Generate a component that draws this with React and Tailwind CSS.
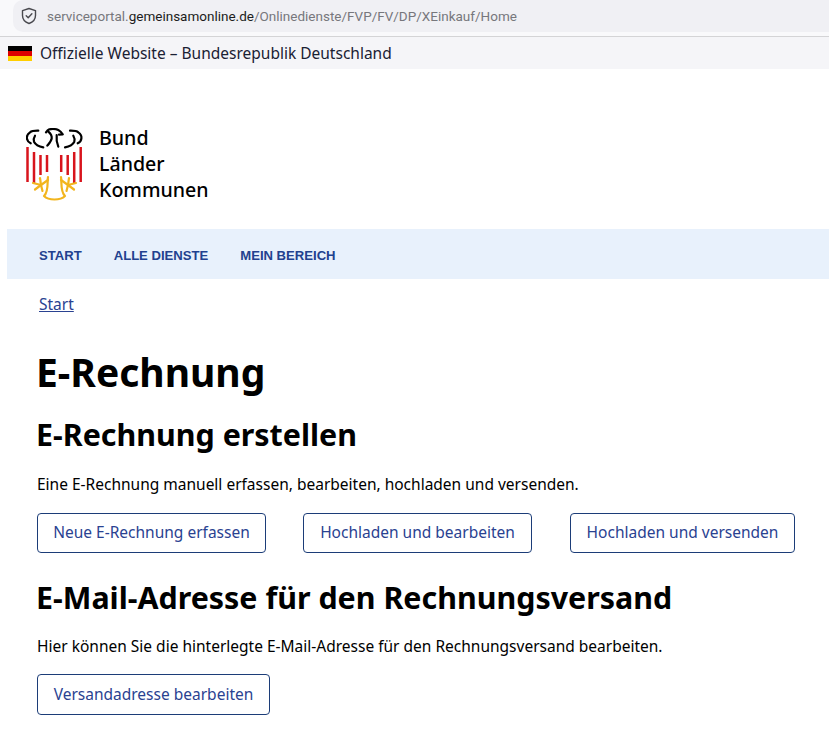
const FONT = "font-['Noto_Sans','Liberation_Sans',sans-serif]";

function Eagle() {
  return (
    <svg width="58" height="73" viewBox="0 0 58 73" fill="none" className="block">
      <g stroke="#000" strokeWidth="2.2" strokeLinecap="round" strokeLinejoin="round">
        <path d="M12.3 2.7 C8 2.6 5.5 3 4 4.3 C1.5 6 0.6 8 0.9 10.3 C1.1 12.5 2.5 14.2 4.7 15.3" />
        <path d="M9 7.7 C7.6 10 7.4 12 8 13.7 C9.5 16.8 13 18.6 17.3 19.3" />
        <path d="M44 2.7 C48 2.6 50.8 3 52.3 4.3 C54.8 6 55.7 8 55.4 10.3 C55.2 12.5 53.9 14.2 51.7 15.3" />
        <path d="M47.3 7.7 C48.7 10 48.9 12 48.3 13.7 C46.8 16.8 43.3 18.6 39 19.3" />
        <path d="M20 4.3 C21 2.8 22 1.8 23.3 1.3 C26.5 0.8 30 1 32.3 2 C34.3 3 35.6 4.5 36.7 6.3 L33 6.6" />
        <path d="M22.3 3.7 C25 6 26 8 25.7 10.3 C25.3 13 23 15.5 21.3 17.7" />
        <path d="M30.7 7 C30.2 11 30.8 15 32.3 18.7" />
      </g>
      <g stroke="#d8141c" strokeWidth="2.5">
        <path d="M1.5 19 V54" />
        <path d="M54.7 19 V54" />
        <path d="M8 24 V55" />
        <path d="M48.2 24 V55" />
        <path d="M14.5 27 V47" />
        <path d="M41.7 27 V47" />
        <path d="M21 27 V44" />
        <path d="M35.2 27 V44" />
      </g>
      <g stroke="#f2b51e" strokeWidth="2.2" strokeLinecap="round" strokeLinejoin="round">
        <path d="M22 49 C21 54 23 63 18 68 C21 71 24 71.5 28.5 71.5 C33 71.5 36 71 39 68 C34 63 36 54 35 49" />
        <path d="M22 52 L15 57 L7 55" />
        <path d="M15 57 L14 50" />
        <path d="M15 57 L9 61.5" />
        <path d="M15 57 L16.5 63" />
        <path d="M35 52 L42 57 L50 55" />
        <path d="M42 57 L43 50" />
        <path d="M42 57 L48 61.5" />
        <path d="M42 57 L40.5 63" />
      </g>
    </svg>
  );
}

function Btn({ children, className = "" }) {
  return (
    <a className={`flex h-10 items-center justify-center rounded-[4px] border border-[#1c3d78] bg-white text-[15.5px] text-[#2a4291] ${className}`}>
      {children}
    </a>
  );
}

export default function App() {
  return (
    <div className={`h-[733px] w-[829px] overflow-hidden bg-white ${FONT} text-black`}>
      <div className="h-[37px] border-b border-[#d4d4d6] bg-[#f9f9fb] pl-[13px]">
        <div className="flex h-8 items-center rounded-l-[10px] bg-[#f0f0f4] pl-[8px] font-['Roboto',sans-serif] text-[13.5px] text-[#77777c]">
          <svg width="16" height="18" viewBox="0 0 16 18" fill="none" stroke="#4a4a4f" strokeWidth="1.4" strokeLinejoin="round" strokeLinecap="round">
            <path d="M8 1.5 L14.5 3.6 V8.5 C14.5 12.5 11.5 15.3 8 16.5 C4.5 15.3 1.5 12.5 1.5 8.5 V3.6 Z" />
            <path d="M5.2 8.8 L7.2 10.8 L10.9 6.8" />
          </svg>
          <span className="ml-[10px] pt-[1px]">
            serviceportal.<span className="text-[#1c1c20]">gemeinsamonline.de</span>/Onlinedienste/FVP/FV/DP/XEinkauf/Home
          </span>
        </div>
      </div>
      <div className="flex h-8 items-center bg-[#f5f5f8] pl-2 text-[15.5px] text-[#1a2133]">
        <span className="flex h-[15px] w-6 flex-col">
          <span className="flex-1 bg-black" />
          <span className="flex-1 bg-[#dd0000]" />
          <span className="flex-1 bg-[#ffce00]" />
        </span>
        <span className="ml-2 pt-[1px]">Offizielle Website – Bundesrepublik Deutschland</span>
      </div>

      <div className="flex h-[160px] items-start pl-[26px] pt-[59px]">
        <Eagle />
        <div className="-mt-[3px] ml-[15px] text-[19.6px] font-medium leading-[26px] text-black">
          <div>Bund</div>
          <div>Länder</div>
          <div>Kommunen</div>
        </div>
      </div>

      <nav className="ml-[7px] flex h-[50px] items-center gap-8 bg-[#e8f1fc] pl-8 pt-[3px] font-['Liberation_Sans',sans-serif] text-[13.1px] font-bold text-[#22418f]">
        <span>START</span>
        <span>ALLE DIENSTE</span>
        <span>MEIN BEREICH</span>
      </nav>

      <div className="pl-[39px] pt-[13px] text-[15.5px] leading-6 text-[#2a4291] underline">Start</div>

      <main className="pl-[37px]">
        <h1 className="-ml-px mt-[30px] text-[39px] font-bold leading-[52px]">E-Rechnung</h1>
        <h2 className="-ml-px mt-[16px] text-[30.4px] font-bold leading-[42px]">E-Rechnung erstellen</h2>
        <p className="mt-[16px] text-[15.5px] leading-6">Eine E-Rechnung manuell erfassen, bearbeiten, hochladen und versenden.</p>
        <div className="mt-[17px] flex">
          <Btn className="w-[229px]">Neue E-Rechnung erfassen</Btn>
          <Btn className="ml-[37px] w-[229px]">Hochladen und bearbeiten</Btn>
          <Btn className="ml-[38px] w-[225px]">Hochladen und versenden</Btn>
        </div>
        <h2 className="-ml-px mt-[24px] text-[30.4px] font-bold leading-[42px]">E-Mail-Adresse für den Rechnungsversand</h2>
        <p className="mt-[15px] text-[15.5px] leading-6">Hier können Sie die hinterlegte E-Mail-Adresse für den Rechnungsversand bearbeiten.</p>
        <Btn className="mt-[16px] h-[41px] w-[233px]">Versandadresse bearbeiten</Btn>
      </main>
    </div>
  );
}
